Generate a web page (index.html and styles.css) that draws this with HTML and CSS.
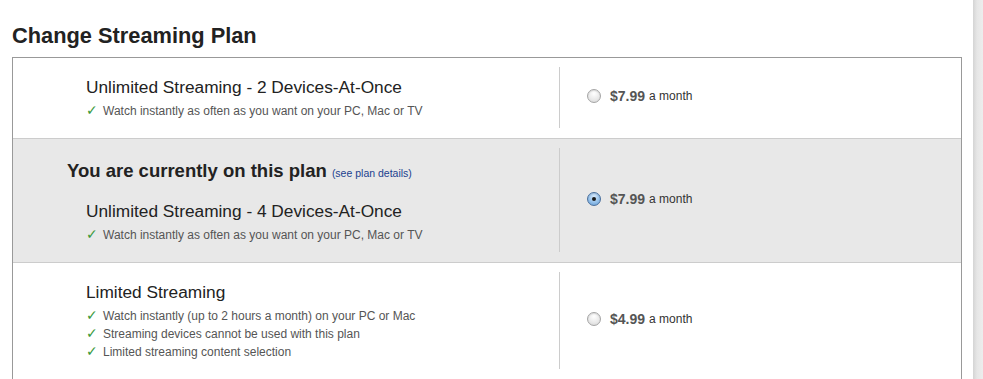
FILE: index.html
```html
<!DOCTYPE html>
<html lang="en">
<head>
  <meta charset="UTF-8" />
  <title>Change Streaming Plan</title>
  <link rel="stylesheet" href="styles.css">
</head>
<body>
  <div class="page">
    <h2 class="title">Change Streaming Plan</h2>
    <div class="plans">
      <div class="plan">
        <div class="plan-info">
          <div class="plan-name">Unlimited Streaming - 2 Devices-At-Once</div>
          <ul class="features">
            <li><span class="check">&#10003;</span>Watch instantly as often as you want on your PC, Mac or TV</li>
          </ul>
        </div>
        <div class="plan-price">
          <label><span class="radio"></span><b>$7.99</b> a month</label>
        </div>
      </div>
      <div class="plan current">
        <div class="plan-info">
          <div class="current-note">You are currently on this plan <a href="#">(see plan details)</a></div>
          <div class="plan-name">Unlimited Streaming - 4 Devices-At-Once</div>
          <ul class="features">
            <li><span class="check">&#10003;</span>Watch instantly as often as you want on your PC, Mac or TV</li>
          </ul>
        </div>
        <div class="plan-price">
          <label><span class="radio checked"></span><b>$7.99</b> a month</label>
        </div>
      </div>
      <div class="plan">
        <div class="plan-info">
          <div class="plan-name">Limited Streaming</div>
          <ul class="features">
            <li><span class="check">&#10003;</span>Watch instantly (up to 2 hours a month) on your PC or Mac</li>
            <li><span class="check">&#10003;</span>Streaming devices cannot be used with this plan</li>
            <li><span class="check">&#10003;</span>Limited streaming content selection</li>
          </ul>
        </div>
        <div class="plan-price">
          <label><span class="radio"></span><b>$4.99</b> a month</label>
        </div>
      </div>
    </div>
  </div>
  <div class="edge"></div>
</body>
</html>
```

FILE: styles.css
```css
body { margin: 0; display: flex; min-height: 100vh; background: #fff; font-family: "Liberation Sans", Arial, sans-serif; color: #333; overflow: hidden; }
.page { width: 962px; padding-left: 12px; box-sizing: border-box; }
.edge { width: 10px; margin-left: 11px; background: linear-gradient(to right, #d4d4d4, #e6e6e6 40%, #ededed); }

.title { font-size: 21.8px; font-weight: bold; color: #222; margin: 23px 0 8px; line-height: 26px; }

.plans { border: 1px solid #999; border-bottom: none; }
.plan { display: flex; border-top: 1px solid #ccc; }
.plan:first-child { border-top: none; }
.plan.current { background: #e8e8e8; }

.plan-info { width: 546px; padding: 18px 0 18px 73px; box-sizing: border-box; }
.current .plan-info { padding-top: 21px; }
.plan-name { font-size: 17.3px; line-height: 22px; color: #222; }
.current-note { font-size: 18.5px; font-weight: bold; line-height: 22px; color: #222; margin: 0 0 16px -19px; }
.current-note a { font-size: 10.5px; font-weight: normal; color: #1b3f8f; text-decoration: none; }

.features { list-style: none; margin: 4px 0 0; padding: 0; }
.features li { font-size: 12px; line-height: 18px; color: #555; }
.check { display: inline-block; width: 17px; color: #3b9a3b; font-family: "DejaVu Sans", sans-serif; font-size: 14px; line-height: 12px; }

.plan-price { flex: 1; display: flex; align-items: center; border-left: 1px solid #ccc; margin: 9px 0 10px; padding-left: 27px; }
.plan-price label { display: flex; align-items: center; font-size: 12px; color: #333; margin-bottom: 3px; }
.plan-price b { font-size: 14px; color: #555; margin: 0 4px 0 9px; }

.radio { width: 12px; height: 12px; border-radius: 50%; border: 1px solid #a5a5a5; background: radial-gradient(circle at 50% 30%, #fff, #e8e8e8 60%, #d2d2d2); box-shadow: inset 0 1px 1px rgba(0,0,0,0.1); position: relative; }
.radio.checked { border-color: #4a6f9c; background: radial-gradient(circle at 50% 30%, #d7e9fb, #8fbde8 60%, #5f97d1); }
.radio.checked::after { content: ""; width: 4px; height: 4px; border-radius: 50%; background: #1a1a1a; position: absolute; left: 4px; top: 4px; }
```
